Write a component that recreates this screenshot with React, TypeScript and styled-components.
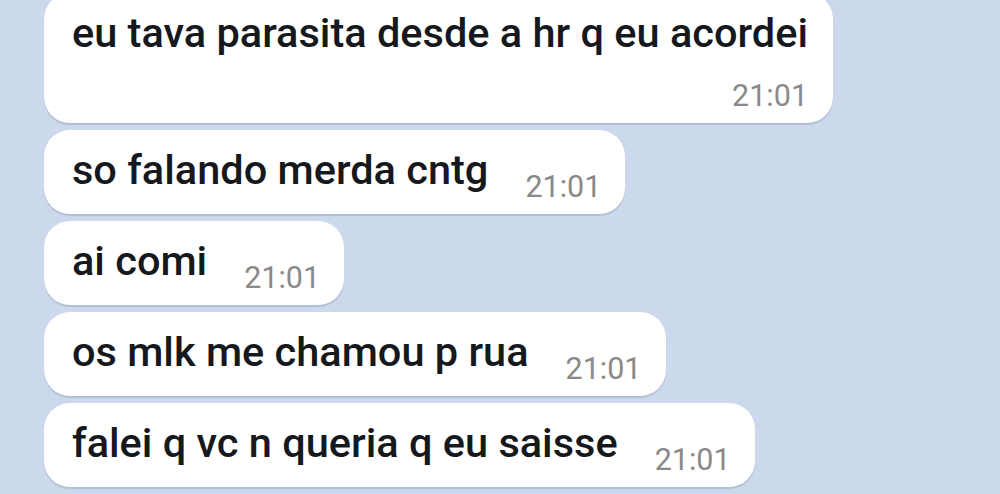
import React from "react";
import styled, { createGlobalStyle } from "styled-components";

const GlobalStyle = createGlobalStyle`
  html, body {
    margin: 0;
    padding: 0;
    background: #ccd9ed;
    overflow: hidden;
  }
  body {
    font-family: Roboto, "Noto Sans", sans-serif;
  }
`;

const Chat = styled.div`
  display: flex;
  flex-direction: column;
  align-items: flex-start;
  gap: 7px;
  margin-top: -7px;
  padding-left: 44px;
  height: 501px;
`;

const Bubble = styled.div<{ $stacked?: boolean }>`
  display: flex;
  flex-direction: ${(p) => (p.$stacked ? "column" : "row")};
  align-items: flex-end;
  background: #ffffff;
  border-radius: 26px;
  box-shadow: 0 1.5px 1px rgba(60, 80, 110, 0.18);
  padding: 12px ${(p) => (p.$stacked ? "25px" : "24px")} 16px 28px;
`;

const Text = styled.span<{ $stacked?: boolean }>`
  font-size: 41.5px;
  font-weight: 500;
  line-height: 56px;
  color: #15181c;
  white-space: nowrap;
  align-self: ${(p) => (p.$stacked ? "flex-start" : "auto")};
`;

const Time = styled.span<{ $stacked?: boolean }>`
  font-size: 30.5px;
  line-height: 29px;
  color: #8a8a8a;
  white-space: nowrap;
  margin-left: ${(p) => (p.$stacked ? "0" : "37px")};
  margin-top: ${(p) => (p.$stacked ? "20px" : "0")};
  margin-bottom: -3px;
`;

const messages = [
  { text: "eu tava parasita desde a hr q eu acordei", time: "21:01", stacked: true },
  { text: "so falando merda cntg", time: "21:01" },
  { text: "ai comi", time: "21:01" },
  { text: "os mlk me chamou p rua", time: "21:01" },
  { text: "falei q vc n queria q eu saisse", time: "21:01" },
];

export default function App() {
  return (
    <>
      <GlobalStyle />
      <Chat>
        {messages.map((m, i) => (
          <Bubble key={i} $stacked={m.stacked}>
            <Text $stacked={m.stacked}>{m.text}</Text>
            <Time $stacked={m.stacked}>{m.time}</Time>
          </Bubble>
        ))}
      </Chat>
    </>
  );
}
